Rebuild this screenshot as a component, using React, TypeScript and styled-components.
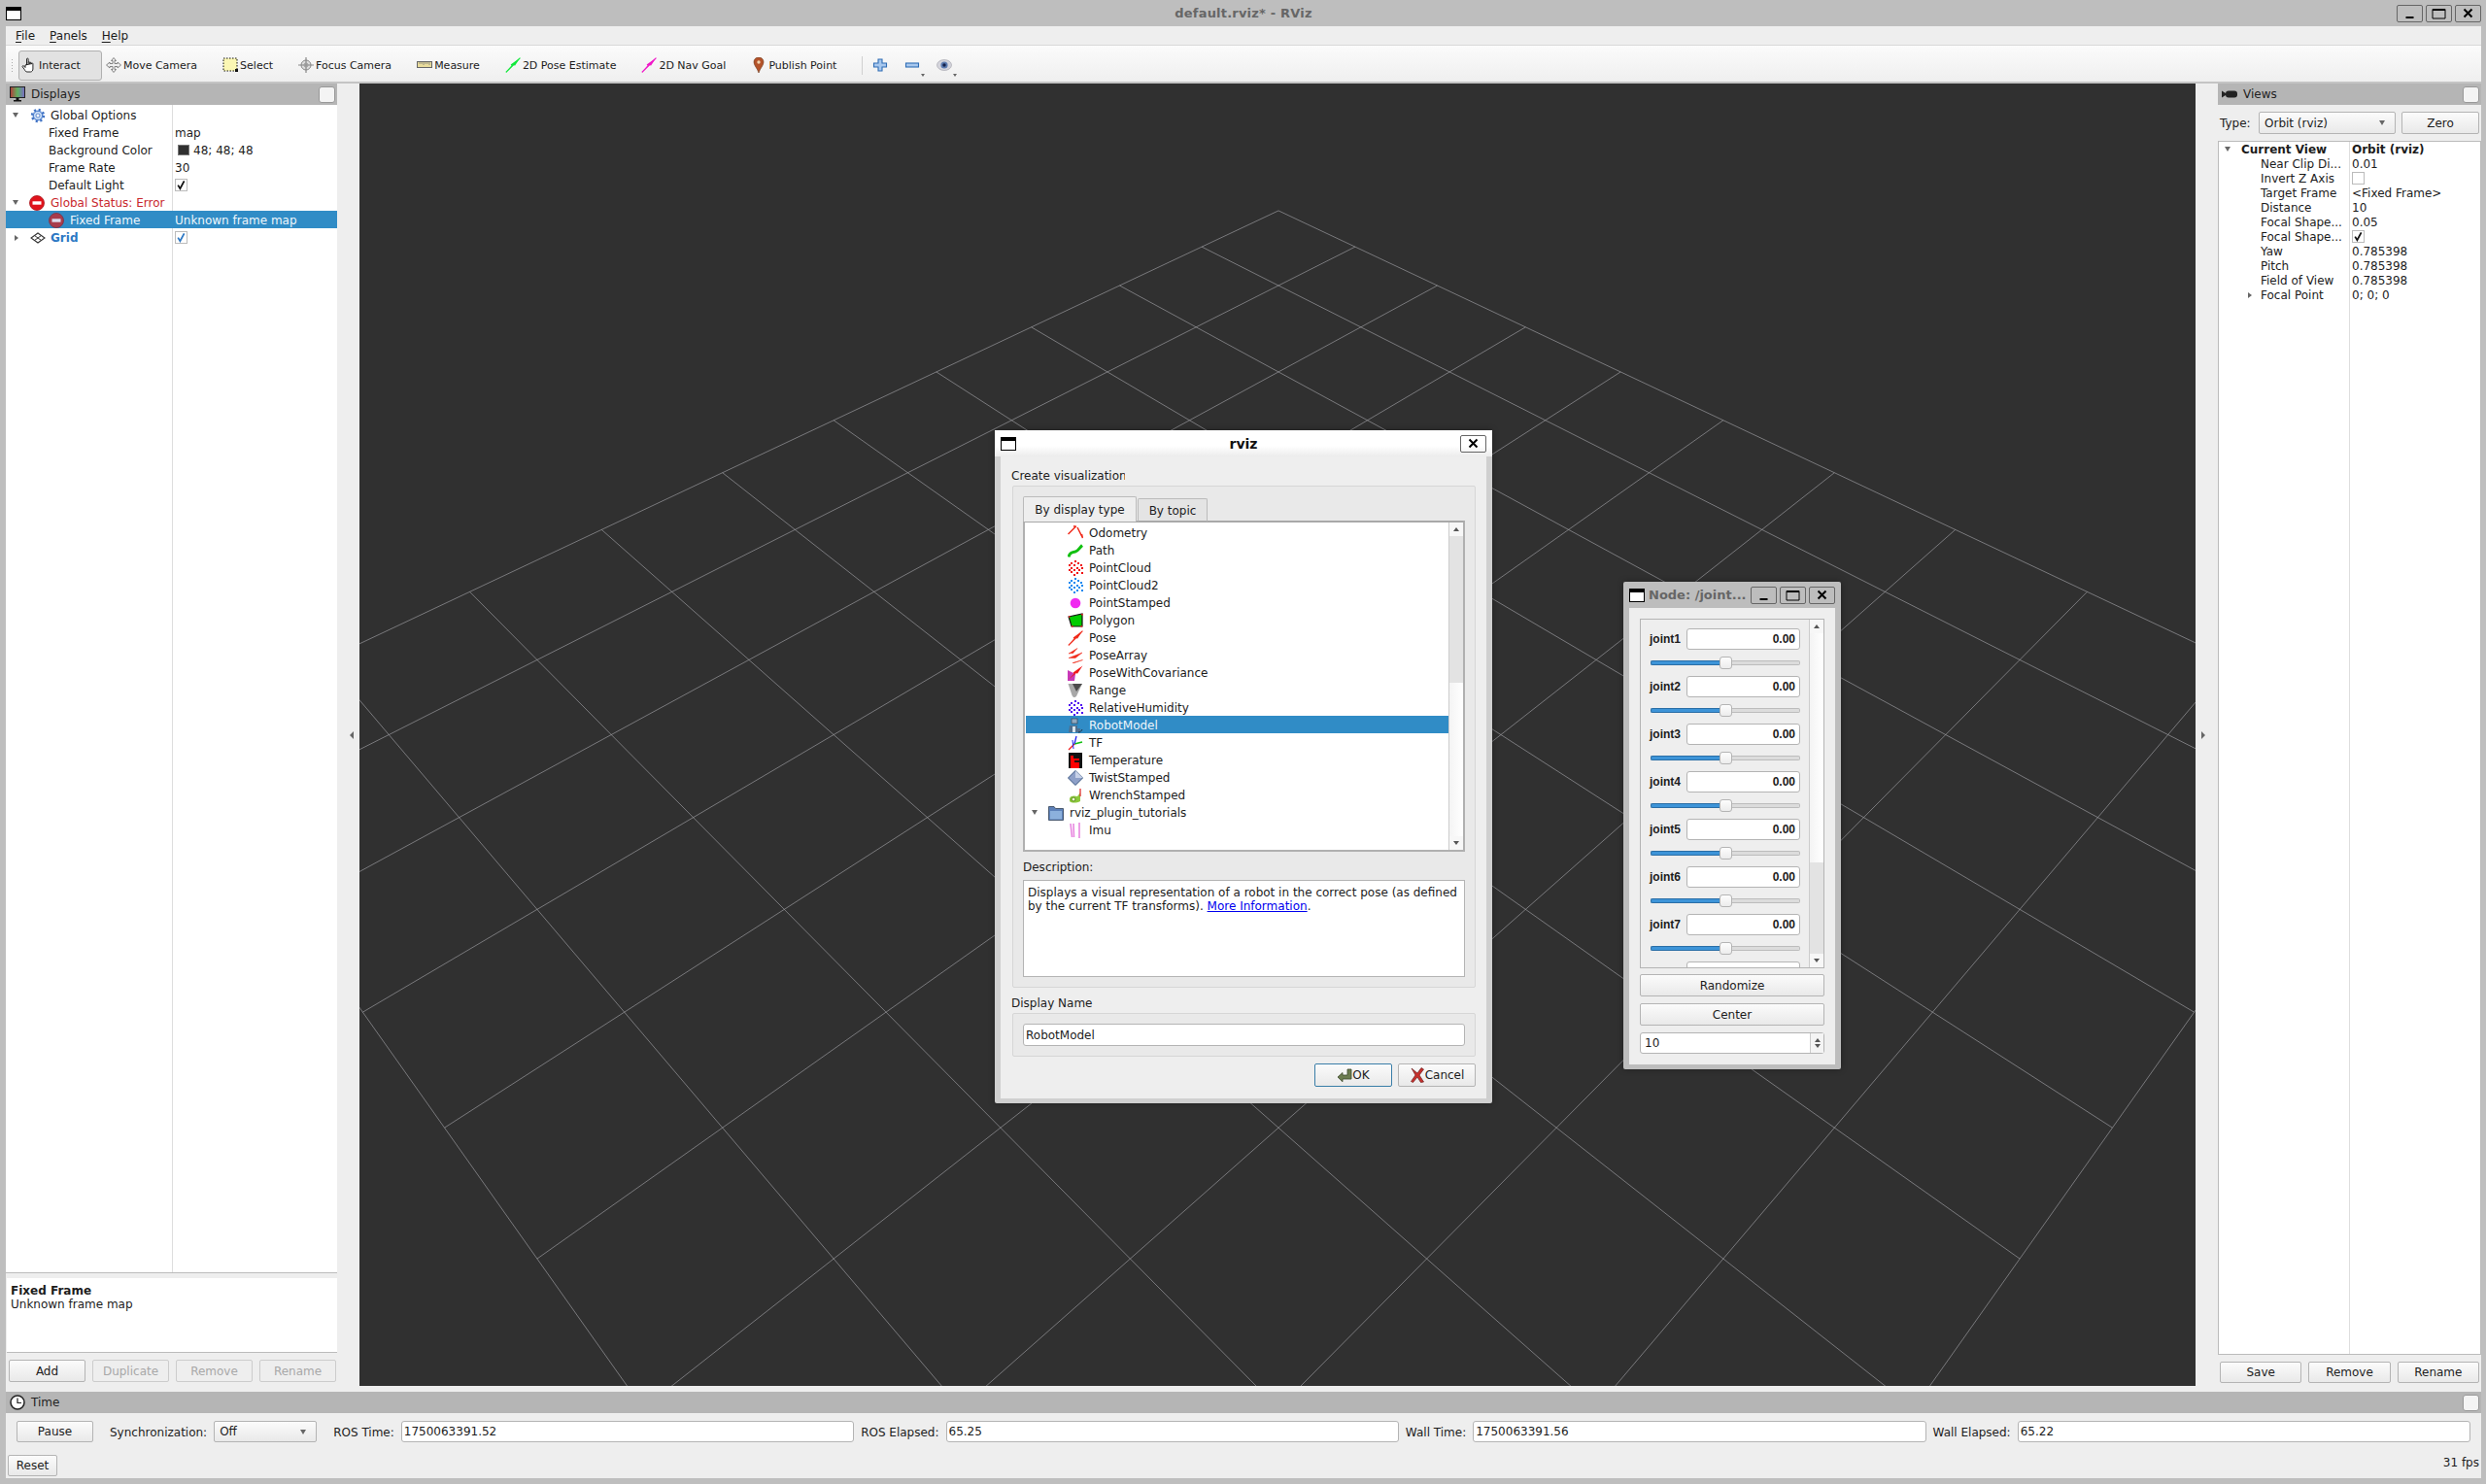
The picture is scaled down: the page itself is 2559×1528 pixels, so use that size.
import React from 'react';
import styled, {createGlobalStyle} from 'styled-components';

const GlobalStyle = createGlobalStyle`
  html, body {
    margin: 0;
    padding: 0;
    overflow: hidden;
    background: #bebebe;
  }
  * {
    box-sizing: border-box;
  }
`

const FONT = `"DejaVu Sans", sans-serif`
const SELECTED = '#308cc6'

// ---------- icons ----------

const IconSvg = styled.svg`
  flex: none;
  display: block;
`

const Ico = ({children}: {children: React.ReactNode}) => (
    <IconSvg width={16} height={16} viewBox="0 0 16 16">{children}</IconSvg>
)

const Check = ({color = '#111'}: {color?: string}) => (
    <IconSvg width="11" height="11" viewBox="0 0 11 11">
        <path d="M2.2 5.6 L4.4 9.2 L8.6 1.4" fill="none" stroke={color} strokeWidth="1.8"/>
    </IconSvg>
)

const HandIcon = () => <Ico><path d="M5.5 8V1.8c0-1 1.6-1 1.6 0V7m0-1.6c0-.9 1.6-.9 1.6 0V7m0-1c0-.9 1.6-.9 1.6 0v1.2m0-.6c0-.8 1.6-.8 1.6 0V12c0 1.500-1 3-2.500 3H6c-1.500 0-2-1-2.800-2.500L1.200 9.800c-.5-1 .8-1.700 1.500-.8L4 10.500V8z" fill="#fff" stroke="#111" strokeWidth=".9"/></Ico>
const MoveIcon = () => <Ico><path d="M8 .5 10.500 3.500H9V6.500H12V5L15.500 8 12 11V9.500H9V12.500H10.500L8 15.500 5.500 12.500H7V9.500H4V11L.5 8 4 5V6.500H7V3.500H5.500Z" fill="#eee" stroke="#777" strokeWidth=".9"/></Ico>
const SelectIcon = () => <Ico><rect x="1" y="1" width="14" height="13" fill="#fbf7b4" stroke="#111" strokeDasharray="1.500 1.500"/><rect x="13" y="12" width="3" height="3" fill="#111"/></Ico>
const FocusIcon = () => <Ico><circle cx="8" cy="8" r="5" fill="#ddd" stroke="#888"/><path d="M8 0V16M0 8H16" stroke="#888" strokeWidth="1.200"/><circle cx="8" cy="8" r="2" fill="none" stroke="#999"/></Ico>
const MeasureIcon = () => <Ico><rect x=".5" y="4.500" width="15" height="6" fill="#e9dc9c" stroke="#666"/><path d="M3 5V7M5 5V7M7 5V8M9 5V7M11 5V7M13 5V8" stroke="#777" strokeWidth=".7"/></Ico>
const PoseIcon = ({color}: {color: string}) => <Ico><path d="M.8 15.500 6.500 8.400 5.600 7.600 15.400.6 10 8.800 9 8Z" fill={color}/><path d="M.8 15.500 15.400.6" stroke={color} strokeWidth="1.100"/></Ico>
const PinIcon = () => <Ico><path d="M8 0C4.800 0 3 2.300 3 5c0 3.500 3.800 6.500 5 11 1.200-4.500 5-7.500 5-11 0-2.700-1.800-5-5-5z" fill="#b4532a" stroke="#6b3a1e" strokeWidth=".6"/><circle cx="8" cy="5" r="1.700" fill="#f0d5b0"/></Ico>
const PlusIcon = () => <Ico><path d="M6 2H10V6H14.500V10H10V14H6V10H1.500V6H6Z" fill="#a8c8ee" stroke="#2f6db5" strokeWidth="1.100"/></Ico>
const MinusIcon = () => <Ico><rect x="1.500" y="6" width="13" height="4" fill="#a8c8ee" stroke="#2f6db5" strokeWidth="1.100"/></Ico>
const EyeIcon = () => <Ico><ellipse cx="8" cy="8" rx="7.500" ry="5.500" fill="#d4d4dc" stroke="#a0a0a8" strokeWidth=".6"/><circle cx="8" cy="8" r="3.600" fill="#5c7bb0"/><circle cx="8" cy="8" r="1.700" fill="#14204a"/></Ico>

const MonitorIcon = () => (
    <Ico>
        <defs>
            <linearGradient id="scr" x1="0" x2="1" y1="0" y2="0">
                <stop offset="0" stopColor="#b33a3a"/>
                <stop offset=".5" stopColor="#60b060"/>
                <stop offset="1" stopColor="#7a6ac8"/>
            </linearGradient>
        </defs>
        <rect x=".5" y=".5" width="15" height="11" fill="url(#scr)" stroke="#222"/>
        <path d="M6.500 12H9.500V14H12V15.500H4V14H6.500Z" fill="#111"/>
    </Ico>
)
const CameraIcon = () => <Ico><path d="M0 4.500 4 7V9L0 11.500Z" fill="#222"/><rect x="4" y="4.500" width="12" height="7" rx="3" fill="#222"/></Ico>
const ClockIcon = () => <Ico><circle cx="8" cy="8" r="7" fill="#fff" stroke="#222" strokeWidth="1.500"/><path d="M8 3.500V8.500H12" fill="none" stroke="#222" strokeWidth="1.200"/></Ico>
const GearIcon = () => <Ico><circle cx="8" cy="8" r="5.800" fill="#a8c4ee" stroke="#3f72c4" strokeWidth="2.800" strokeDasharray="2 2.550"/><circle cx="8" cy="8" r="4.600" fill="#c9dcf5" stroke="#3f72c4" strokeWidth=".8"/><circle cx="8" cy="8" r="2" fill="#fff" stroke="#3f72c4" strokeWidth=".8"/></Ico>
const GridIcon = () => <Ico><path d="M8 3 15 8 8 13 1 8Z" fill="#fff" stroke="#333" strokeWidth="1.100"/><path d="M4.500 5.500 11.500 10.500M11.500 5.500 4.500 10.500" stroke="#333" strokeWidth="1"/></Ico>
const ErrorIcon = ({dim}: {dim?: boolean}) => (
    <Ico>
        <circle cx="8" cy="8" r="7.500" fill={dim ? '#a83c4c' : '#e0141c'} stroke={dim ? '#7c3044' : '#a81018'} strokeWidth=".8"/>
        <rect x="3.500" y="6.300" width="9" height="3.400" fill={dim ? '#dde' : '#fff'}/>
    </Ico>
)

const OdometryIcon = () => <Ico><path d="M.5 9 8 1.500M6 .8 9 1.300M10 2 15.500 13M14.500 9 15.500 13" fill="none" stroke="#f02a1a" strokeWidth="1.500"/></Ico>
const PathIcon = () => <Ico><path d="M1 14.500C2 10 5 9.500 8 9S12 5 15 2.500" fill="none" stroke="#10c010" strokeWidth="3"/></Ico>
const Dots = ({color}: {color: string}) => (
    <Ico>
        {[[7, 0], [3, 2], [10, 2], [1, 4], [6, 4], [13, 4], [3, 7], [9, 7], [14, 7], [1, 9], [6, 9], [11, 9], [3, 11], [9, 12], [14, 12], [6, 14]].map(([x, y]) => (
            <rect key={`${x}-${y}`} x={x} y={y} width="2" height="2" fill={color}/>
        ))}
    </Ico>
)
const PointStampedIcon = () => <Ico><circle cx="8" cy="8" r="5.300" fill="#f02af0"/></Ico>
const PolygonIcon = () => <Ico><path d="M1 4 15 1V14H4Z" fill="#0c0"/><path d="M1 4 15 1V14H4Z" fill="none" stroke="#111" strokeWidth="1.200"/><path d="M1 4H2.500M15 1V2.500M15 14H13.500M4 14H5.500" stroke="#f22" strokeWidth="1.500"/></Ico>
const PoseArrayIcon = () => <Ico><path d="M1 6 10 .5 5 6 4.500 5.500ZM1 10.500 15 5 8 10.500ZM5 15.500 15.500 12.500 7 15.500Z" fill="#f02a1a" stroke="#f02a1a" strokeWidth=".5"/></Ico>
const CovarianceIcon = () => <Ico><path d="M0 5 8 9 7 16H0Z" fill="#c838b8"/><path d="M1 14.500 6.500 8.500 5.600 7.600 15.400.6 10 8.800 9 8Z" fill="#f01a1a"/></Ico>
const RangeIcon = () => <Ico><path d="M.5 1H15L9 14C7 16 5.500 15 4.500 13Z" fill="#a8a8a8"/><path d="M5 1H15L9 9Z" fill="#4c4c4c"/></Ico>
const RobotIcon = () => <Ico><rect x="4" y="1" width="6" height="5" fill="#8fa8c0" stroke="#345" strokeWidth=".7"/><path d="M2 8H10V15H1ZM10 11H13V15H10Z" fill="#4f6f8f"/><path d="M11 15C13 15 14 14 15 12" stroke="#234" fill="none"/><rect x="5" y="9" width="3" height="6" fill="#d8e4ec"/></Ico>
const TfIcon = () => <Ico><path d="M7 9 1 15" stroke="#f01a1a" strokeWidth="1.300"/><path d="M7 9 15 7" stroke="#10c010" strokeWidth="1.300"/><path d="M7 9 9 1" stroke="#2020f0" strokeWidth="1.300"/><path d="M5 5 6 14" stroke="#2020f0" strokeWidth="1"/></Ico>
const TempIcon = () => <Ico><rect x="1" y="0" width="14" height="16" fill="#111"/><path d="M4 3H6V6H12V8H7V10H12V16H3V3Z" fill="#f00"/><path d="M12 0H15V16H12Z" fill="#111"/></Ico>
const TwistIcon = () => <Ico><path d="M8 .5 15.500 8 8 15.500 .5 8Z" fill="#8ea0c8" stroke="#33507c"/><path d="M8 .5 15.500 8 8 8Z" fill="#c8d2e8"/></Ico>
const WrenchIcon = () => <Ico><path d="M2 11C3 8 7 8 10 9L13 5V14C9 16 4 16 2 14Z" fill="#8cc83c"/><circle cx="6" cy="12" r="2" fill="#f0f8d0" stroke="#5a8c1c"/><path d="M13 9V1" stroke="#e03030" strokeWidth="1.300"/></Ico>
const FolderIcon = () => <Ico><path d="M.5 1.500H6L7.500 3.500H15.500V15.500H.5Z" fill="#5c80b8" stroke="#4a5a70"/><rect x="2" y="6" width="12" height="8.500" fill="#8cb0dc"/></Ico>
const ImuIcon = () => <Ico><path d="M3 1 4.500 15M6 1 6.500 15M12 0V16" stroke="#e888e0" strokeWidth="1.600" fill="none"/></Ico>

const OkIcon = () => <Ico><path d="M1 10 6 5.500V8H11V2H15V12H6V14.800Z" fill="#6c7c50" stroke="#3e4a2c" strokeWidth=".8"/></Ico>
const CancelIcon = () => <Ico><path d="M2 1 8 6 12 .5 14.500 2 10 8 14.500 15 11.500 15.500 8 10 3.500 15.500 1.500 14.500 6 8Z" fill="#c8302c" stroke="#6c2020" strokeWidth=".7"/></Ico>

// ---------- window chrome ----------

const Root = styled.div`
  position: relative;
  width: 2559px;
  height: 1528px;
  display: flex;
  flex-direction: column;
  padding: 0 5px 6px 6px;
  background: #bebebe;
  font-family: ${FONT};
  font-size: 12px;
  color: #1c1c1c;
`

const TitleBar = styled.div`
  height: 27px;
  margin: 0 -5px 0 -6px;
  padding: 0 5px 0 6px;
  display: grid;
  grid-template-columns: 1fr auto 1fr;
  align-items: center;
  letter-spacing: .2px;
  flex: none;
  & > :last-child {
    justify-self: end;
  }
`

const TitleText = styled.div<{$dim?: boolean}>`
  font-size: 13px;
  font-weight: 700;
  color: ${p => p.$dim ? '#666' : '#111'};
`

const DialogName = styled(TitleText)`
  font-size: 14px;
`

const NodeName = styled(TitleText)`
  flex: 1;
`

const WinIcon = styled.div`
  width: 16px;
  height: 14px;
  background: #fff;
  border: 1.5px solid #000;
  border-top-width: 4px;
  flex: none;
`

const WinButtons = styled.div`
  display: flex;
  gap: 3px;
  flex: none;
`

const WinButton = styled.div`
  width: 27px;
  height: 18px;
  border: 1px solid #666;
  border-radius: 2px;
  display: flex;
  align-items: center;
  justify-content: center;
`

const MinGlyph = () => <svg width="11" height="12" viewBox="0 0 11 12"><rect x="1.500" y="9" width="8" height="2" fill="#000"/></svg>
const MaxGlyph = () => <svg width="15" height="12" viewBox="0 0 15 12"><path d="M1 1.500H14V11H1Z" fill="none" stroke="#000"/><rect x="1" y="1" width="13" height="2" fill="#000"/></svg>
const CloseGlyph = () => <svg width="11" height="11" viewBox="0 0 11 11"><path d="M1.500 1.500 9.500 9.500M9.500 1.500 1.500 9.500" stroke="#000" strokeWidth="2"/></svg>

const MenuBar = styled.div`
  height: 20px;
  flex: none;
  display: flex;
  gap: 15px;
  padding-left: 10px;
  align-items: center;
  background: #eee;
  border-bottom: 1px solid #d8d8d8;
`

const MenuItem = styled.span`
  & u {
    text-underline-offset: 2px;
  }
`

const Toolbar = styled.div`
  height: 39px;
  flex: none;
  display: flex;
  align-items: center;
  padding-top: 3px;
  font-size: 11px;
  background: linear-gradient(#fbfbfb, #efefef);
  border-bottom: 2px solid #c4c4c4;
`

const Gripper = styled.div`
  width: 4px;
  height: 15px;
  margin: 0 4px 0 5px;
  flex: none;
  background: radial-gradient(circle, #aaa 0.6px, transparent 0.8px) 0 0 / 3px 3px;
`

const ToolButton = styled.div<{$active?: boolean}>`
  height: 31px;
  display: flex;
  align-items: center;
  gap: 2px;
  padding: 0 21px 0 ${p => p.$active ? '2px' : '3px'};
  flex: none;
  border-radius: 3px;
  border: 1px solid ${p => p.$active ? '#b0b0b0' : 'transparent'};
  background: ${p => p.$active ? '#e2e2e2' : 'none'};
`

const ToolSep = styled.div`
  width: 1px;
  height: 19px;
  margin: 0 9px 0 4px;
  background: #d0d0d0;
  flex: none;
`

const IconTool = styled.div`
  width: 33px;
  height: 24px;
  padding-left: 1px;
  display: flex;
  align-items: center;
  flex: none;
  position: relative;
`

const DropMark = styled.span`
  position: absolute;
  right: 11px;
  bottom: 0;
  border-left: 2.500px solid transparent;
  border-right: 2.500px solid transparent;
  border-top: 3px solid #666;
`

// ---------- main panes ----------

const Main = styled.div`
  flex: none;
  height: 1347px;
  display: flex;
  background: #eee;
  padding-bottom: 6px;
`

const SidePanel = styled.div<{$width: number}>`
  width: ${p => p.$width}px;
  flex: none;
  display: flex;
  flex-direction: column;
`

const PanelHeader = styled.div`
  height: 22px;
  flex: none;
  display: flex;
  align-items: center;
  gap: 6px;
  padding: 0 2px 0 4px;
  background: #b5b5b5;
  color: #222;
`

const HeaderTitle = styled.span`
  flex: 1;
`

const FloatButton = styled.div`
  width: 17px;
  height: 17px;
  background: #f4f4f4;
  border: 1px solid #999;
  border-radius: 3px;
  flex: none;
`

const Tree = styled.div<{$split: number, $pad: number, $framed?: boolean}>`
  flex: 1;
  min-height: 0;
  padding-top: ${p => p.$pad}px;
  background: linear-gradient(#dedede, #dedede) ${p => p.$split}px 0 / 1px 100% no-repeat, #fff;
  border: ${p => p.$framed ? '1px solid #bbb' : 'none'};
  border-bottom: 1px solid #bbb;
`

const TreeRow = styled.div<{$h: number, $split: number, $selected?: boolean}>`
  height: ${p => p.$h}px;
  padding-top: ${p => p.$h > 15 ? 1 : 0}px;
  display: grid;
  grid-template-columns: ${p => p.$split}px 1fr;
  align-items: center;
  background: ${p => p.$selected ? SELECTED : 'none'};
  color: ${p => p.$selected ? '#eef6fb' : 'inherit'};
`

const NameCell = styled.div<{$indent: number, $color?: string, $bold?: boolean}>`
  display: flex;
  align-items: center;
  padding-left: ${p => p.$indent}px;
  color: ${p => p.$color || 'inherit'};
  font-weight: ${p => p.$bold ? 700 : 400};
  white-space: nowrap;
  overflow: hidden;
`

const ValueCell = styled.div<{$bold?: boolean, $pad?: number}>`
  display: flex;
  align-items: center;
  gap: 4px;
  padding-left: ${p => p.$pad ?? 3}px;
  font-weight: ${p => p.$bold ? 700 : 400};
  white-space: nowrap;
`

const ArrowSlot = styled.div<{$w: number}>`
  width: ${p => p.$w}px;
  flex: none;
  display: flex;
`

const ArrowDown = styled.span`
  border-left: 3.500px solid transparent;
  border-right: 3.500px solid transparent;
  border-top: 5px solid #666;
`

const ArrowRight = styled.span`
  margin-left: 2px;
  border-top: 3.500px solid transparent;
  border-bottom: 3.500px solid transparent;
  border-left: 4px solid #666;
`

const RowIcon = styled.span<{$gap: number}>`
  margin-right: ${p => p.$gap}px;
  flex: none;
`

const CheckBox = styled.span`
  width: 13px;
  height: 13px;
  border: 1px solid #bbb;
  background: #fff;
  display: flex;
  align-items: center;
  justify-content: center;
`

const Swatch = styled.span`
  width: 12px;
  height: 11px;
  margin-left: 3px;
  background: #303030;
  border: 1px solid #777;
`

const SplitHandle = styled.div`
  height: 5px;
  flex: none;
`

const HelpBox = styled.div`
  height: 77px;
  flex: none;
  margin-left: 1px;
  padding: 6px 4px;
  background: #fff;
  border-bottom: 1px solid #bbb;
  line-height: 14px;
`

const HelpTitle = styled.div`
  font-weight: 700;
`

const ButtonRow = styled.div<{$pad: string, $gap: number}>`
  display: flex;
  gap: ${p => p.$gap}px;
  padding: ${p => p.$pad};
  flex: none;
`

const Button = styled.div<{$disabled?: boolean, $h?: number, $w?: number, $default?: boolean}>`
  height: ${p => p.$h || 23}px;
  ${p => p.$w ? `width: ${p.$w}px; flex: none;` : 'flex: 1;'}
  display: flex;
  align-items: center;
  justify-content: center;
  border-radius: 2px;
  border: 1px solid ${p => p.$default ? '#3a7ea8' : p.$disabled ? '#ccc' : '#b4b4b4'};
  background: ${p => p.$disabled ? '#eee' : 'linear-gradient(#fbfbfb, #e9e9e9)'};
  color: ${p => p.$disabled ? '#a8a8a8' : 'inherit'};
`

const ZeroButton = styled(Button)`
  margin-left: 6px;
`

const NodeButton = styled(Button)`
  flex: none;
`

const Splitter = styled.div<{$width: number, $pad: string}>`
  width: ${p => p.$width}px;
  flex: none;
  display: flex;
  align-items: center;
  padding: ${p => p.$pad};
  margin-bottom: -1px;
`

const SplitArrowLeft = styled.span`
  border-top: 4px solid transparent;
  border-bottom: 4px solid transparent;
  border-right: 4px solid #666;
`

const SplitArrowRight = styled.span`
  border-top: 4px solid transparent;
  border-bottom: 4px solid transparent;
  border-left: 4px solid #666;
`

const Viewport = styled.div`
  flex: 1;
  min-width: 0;
  background: #303030;
`

const ViewRow = styled.div`
  height: 37px;
  flex: none;
  display: flex;
  align-items: center;
  padding: 0 2px;
`

const TypeLabel = styled.span`
  width: 40px;
  flex: none;
`

const Combo = styled.div<{$w: number, $h?: number}>`
  width: ${p => p.$w}px;
  height: ${p => p.$h || 23}px;
  flex: none;
  display: flex;
  align-items: center;
  justify-content: space-between;
  padding: 0 10px 0 5px;
  border: 1px solid #b4b4b4;
  border-radius: 2px;
  background: linear-gradient(#fbfbfb, #e9e9e9);
`

// ---------- time panel ----------

const TimePanel = styled.div`
  flex: 1;
  display: flex;
  flex-direction: column;
  background: #eee;
`

const TimeRow = styled.div`
  height: 30px;
  margin-top: 8px;
  padding: 0 11px;
  display: flex;
  align-items: flex-start;
  gap: 7px;
`

const TimeLabel = styled.span<{$left?: number}>`
  flex: none;
  height: 22px;
  padding-top: 2px;
  display: flex;
  align-items: center;
  margin-left: ${p => p.$left || 0}px;
`

const LineInput = styled.div<{$right?: boolean, $bold?: boolean, $w?: number, $h?: number}>`
  ${p => p.$w ? `width: ${p.$w}px; flex: none;` : 'flex: 1; min-width: 0;'}
  height: ${p => p.$h || 22}px;
  display: flex;
  align-items: center;
  justify-content: ${p => p.$right ? 'flex-end' : 'flex-start'};
  padding: 0 4px 0 2px;
  background: #fff;
  border: 1px solid #b4b4b4;
  border-radius: 3px;
  font-family: ${p => p.$bold ? `"Liberation Sans", sans-serif` : 'inherit'};
  font-weight: ${p => p.$bold ? 700 : 400};
`

const NameInput = styled(LineInput)`
  flex: none;
`

const ResetRow = styled.div`
  margin-top: 5px;
  display: flex;
  align-items: center;
  justify-content: space-between;
  padding: 0 2px;
`

const FpsLabel = styled.span`
  margin-bottom: 7px;
`

// ---------- floating windows ----------

const Float = styled.div<{$x: number, $y: number, $w: number, $h: number}>`
  position: absolute;
  left: ${p => p.$x}px;
  top: ${p => p.$y}px;
  width: ${p => p.$w}px;
  height: ${p => p.$h}px;
  display: flex;
  flex-direction: column;
  padding: 0 6px 5px;
  background: ${p => p.$w > 300 ? '#cfcfcf' : '#bdbdbd'};
  border-radius: 2px;
  box-shadow: 0 0 6px rgba(0, 0, 0, .35);
`

const DialogTitle = styled.div`
  height: 27px;
  margin: 0 -6px;
  padding: 0 6px;
  flex: none;
  display: grid;
  grid-template-columns: 27px 1fr 27px;
  align-items: center;
  justify-items: center;
  background: linear-gradient(#fff 60%, #ececec);
  & > :first-child {
    justify-self: start;
  }
`

const DialogBody = styled.div`
  flex: 1;
  display: flex;
  flex-direction: column;
  padding: 0 11px 0 12px;
  background: #eee;
`

const ClipLabel = styled.div`
  width: 117px;
  height: 30px;
  margin-left: -1px;
  display: flex;
  align-items: center;
  padding-top: 9px;
  overflow: hidden;
  white-space: nowrap;
  flex: none;
`

const GroupBox = styled.div`
  display: flex;
  flex-direction: column;
  padding: 10px;
  background: #e9e9e9;
  border: 1px solid #d6d6d6;
  border-radius: 2px;
  flex: none;
`

const Tabs = styled.div`
  height: 26px;
  margin-bottom: -1px;
  display: flex;
  align-items: flex-end;
  position: relative;
  flex: none;
`

const Tab = styled.div<{$active?: boolean}>`
  height: ${p => p.$active ? 26 : 24}px;
  width: ${p => p.$active ? 117 : 72}px;
  margin-left: ${p => p.$active ? 0 : 1}px;
  padding-top: 1px;
  display: flex;
  align-items: center;
  justify-content: center;
  flex: none;
  background: ${p => p.$active ? '#eee' : '#e4e4e4'};
  border: 1px solid #bbb;
  border-bottom: ${p => p.$active ? 'none' : '1px solid #aaa'};
  border-radius: 2px 2px 0 0;
`

const ListBox = styled.div`
  height: 341px;
  flex: none;
  display: flex;
  background: #fff;
  border: 2px solid #b0b0b0;
  border-top-color: #a8a8a8;
`

const List = styled.div`
  flex: 1;
  min-width: 0;
  padding: 1px 0 0 1px;
`

const ListRow = styled.div<{$indent: number, $selected?: boolean}>`
  height: 18px;
  display: flex;
  align-items: center;
  padding: 1px 0 0 ${p => p.$indent}px;
  background: ${p => p.$selected ? SELECTED : 'none'};
  color: ${p => p.$selected ? '#eef6fb' : 'inherit'};
`

const Scroll = styled.div`
  width: 15px;
  flex: none;
  display: flex;
  flex-direction: column;
  border-left: 1px solid #ccc;
  background: #fdfdfd;
`

const ScrollStep = styled.div`
  height: 14px;
  flex: none;
  display: flex;
  align-items: center;
  justify-content: center;
  background: #f7f7f7;
`

const ScrollUp = styled.span`
  border-left: 3.500px solid transparent;
  border-right: 3.500px solid transparent;
  border-bottom: 4px solid #555;
`

const ScrollDown = styled.span`
  border-left: 3.500px solid transparent;
  border-right: 3.500px solid transparent;
  border-top: 4px solid #555;
`

const ScrollPart = styled.div<{$grey?: boolean, $h?: number}>`
  ${p => p.$h ? `height: ${p.$h}px; flex: none;` : 'flex: 1;'}
  background: ${p => p.$grey ? '#e3e3e3' : 'linear-gradient(90deg, #f4f4f4, #fff)'};
`

const FieldLabel = styled.div`
  height: 29px;
  flex: none;
  display: flex;
  align-items: center;
  padding-top: 2px;
`

const DescBox = styled.div`
  height: 100px;
  flex: none;
  padding: 5px 4px;
  background: #fff;
  border: 1px solid #b4b4b4;
  line-height: 14px;
  white-space: nowrap;
`

const DescLink = styled.span`
  color: #0000ee;
  text-decoration: underline;
`

const NameLabel = styled.div`
  height: 26px;
  margin-left: -1px;
  padding-top: 6px;
  display: flex;
  align-items: center;
  flex: none;
`

const DialogButtons = styled.div`
  display: flex;
  justify-content: flex-end;
  gap: 6px;
  padding-top: 7px;
  flex: none;
`

// ---------- joint state window ----------

const NodeTitle = styled.div`
  height: 27px;
  flex: none;
  display: flex;
  align-items: center;
  gap: 4px;
`

const NodeBody = styled.div`
  flex: 1;
  min-height: 0;
  display: flex;
  flex-direction: column;
  padding: 11px 11px 0;
  background: #eee;
`

const JointBox = styled.div`
  height: 360px;
  flex: none;
  display: flex;
  border: 1px solid #b4b4b4;
  overflow: hidden;
`

const JointList = styled.div`
  flex: 1;
  min-width: 0;
  padding: 9px 9px 0 9px;
  overflow: hidden;
`

const Joint = styled.div`
  height: 49px;
  display: flex;
  flex-direction: column;
  gap: 7px;
`

const JointHead = styled.div`
  display: flex;
  align-items: center;
  height: 22px;
  flex: none;
  font-family: "Liberation Sans", sans-serif;
  font-weight: 700;
`

const JointName = styled.span`
  width: 38px;
  flex: none;
`

const Slider = styled.div`
  height: 13px;
  margin: 0 0 0 1px;
  width: 154px;
  display: flex;
  align-items: center;
  flex: none;
`

const SliderFill = styled.div`
  width: 71px;
  height: 5px;
  background: #3d94d8;
  border: 1px solid #2a6ea6;
  border-right: none;
  border-radius: 2px 0 0 2px;
`

const SliderKnob = styled.div`
  width: 13px;
  height: 13px;
  flex: none;
  background: linear-gradient(#fdfdfd, #ececec);
  border: 1px solid #b4b4b4;
  border-radius: 3px;
`

const SliderRest = styled.div`
  flex: 1;
  height: 5px;
  background: #dcdcdc;
  border: 1px solid #bcbcbc;
  border-left: none;
  border-radius: 0 2px 2px 0;
`

const NodeControls = styled.div`
  display: flex;
  flex-direction: column;
  gap: 7px;
  padding-top: 6px;
  flex: none;
`

const SpinRow = styled.div`
  height: 22px;
  display: flex;
  background: #fff;
  border: 1px solid #b4b4b4;
  border-radius: 3px;
`

const SpinValue = styled.div`
  flex: 1;
  display: flex;
  align-items: center;
  padding-left: 4px;
`

const SpinButtons = styled.div`
  width: 14px;
  flex: none;
  display: flex;
  flex-direction: column;
  align-items: center;
  justify-content: center;
  gap: 2px;
  border-left: 1px solid #ccc;
  background: #f4f4f4;
`

// ---------- ground grid, projected the same way the orbit camera does ----------

const VIEW_W = 1890
const VIEW_H = 1341
const FOCAL = (VIEW_H / 2) / Math.tan(0.785398 / 2)

function project(x: number, y: number): [number, number] {
    // camera at (5, 5, 7.07) looking at the origin
    const s = Math.SQRT1_2
    const rx = x - 5
    const ry = y - 5
    const rz = -10 * s
    const depth = -0.5 * rx - 0.5 * ry - s * rz
    const up = -0.5 * rx - 0.5 * ry + s * rz
    const side = -s * rx + s * ry
    return [VIEW_W / 2 + 1 + FOCAL * side / depth, VIEW_H / 2 - FOCAL * up / depth]
}

const GroundGrid = () => {
    const lines = []
    for (let i = -5; i <= 5; i++) {
        lines.push([project(i, -5), project(i, 5)], [project(-5, i), project(5, i)])
    }
    return (
        <IconSvg width="100%" height="100%" viewBox={`0 0 ${VIEW_W} ${VIEW_H}`}>
            {lines.map(([a, b], i) => (
                <line key={i} x1={a[0]} y1={a[1]} x2={b[0]} y2={b[1]} stroke="rgb(160,160,164)" strokeOpacity=".65" strokeWidth="1"/>
            ))}
        </IconSvg>
    )
}

// ---------- data ----------

const viewRows: [string, React.ReactNode][] = [
    ['Near Clip Di...', '0.01'],
    ['Invert Z Axis', <CheckBox/>],
    ['Target Frame', '<Fixed Frame>'],
    ['Distance', '10'],
    ['Focal Shape...', '0.05'],
    ['Focal Shape...', <CheckBox><Check/></CheckBox>],
    ['Yaw', '0.785398'],
    ['Pitch', '0.785398'],
    ['Field of View', '0.785398'],
]

const displayTypes: [string, React.ReactNode][] = [
    ['Odometry', <OdometryIcon/>],
    ['Path', <PathIcon/>],
    ['PointCloud', <Dots color="#f01010"/>],
    ['PointCloud2', <Dots color="#1088f0"/>],
    ['PointStamped', <PointStampedIcon/>],
    ['Polygon', <PolygonIcon/>],
    ['Pose', <PoseIcon color="#f02a1a"/>],
    ['PoseArray', <PoseArrayIcon/>],
    ['PoseWithCovariance', <CovarianceIcon/>],
    ['Range', <RangeIcon/>],
    ['RelativeHumidity', <Dots color="#5010f0"/>],
    ['RobotModel', <RobotIcon/>],
    ['TF', <TfIcon/>],
    ['Temperature', <TempIcon/>],
    ['TwistStamped', <TwistIcon/>],
    ['WrenchStamped', <WrenchIcon/>],
]

const tools: [string, React.ReactNode][] = [
    ['Move Camera', <MoveIcon/>],
    ['Select', <SelectIcon/>],
    ['Focus Camera', <FocusIcon/>],
    ['Measure', <MeasureIcon/>],
    ['2D Pose Estimate', <PoseIcon color="#12e83c"/>],
    ['2D Nav Goal', <PoseIcon color="#f018c8"/>],
    ['Publish Point', <PinIcon/>],
]

const joints = ['joint1', 'joint2', 'joint3', 'joint4', 'joint5', 'joint6', 'joint7', '']

const WindowButtons = () => (
    <WinButtons>
        <WinButton><MinGlyph/></WinButton>
        <WinButton><MaxGlyph/></WinButton>
        <WinButton><CloseGlyph/></WinButton>
    </WinButtons>
)

function App() {
    return (
        <Root>
            <GlobalStyle/>
            <TitleBar>
                <WinIcon/>
                <TitleText $dim>default.rviz* - RViz</TitleText>
                <WindowButtons/>
            </TitleBar>
            <MenuBar>
                <MenuItem><u>F</u>ile</MenuItem>
                <MenuItem><u>P</u>anels</MenuItem>
                <MenuItem><u>H</u>elp</MenuItem>
            </MenuBar>
            <Toolbar>
                <Gripper/>
                <ToolButton $active><HandIcon/>Interact</ToolButton>
                {tools.map(([label, icon]) => (
                    <ToolButton key={label}>{icon}{label}</ToolButton>
                ))}
                <ToolSep/>
                <IconTool><PlusIcon/></IconTool>
                <IconTool><MinusIcon/><DropMark/></IconTool>
                <IconTool><EyeIcon/><DropMark/></IconTool>
            </Toolbar>
            <Main>
                <SidePanel $width={341}>
                    <PanelHeader>
                        <MonitorIcon/>
                        <HeaderTitle>Displays</HeaderTitle>
                        <FloatButton/>
                    </PanelHeader>
                    <Tree $split={171} $pad={1}>
                        <TreeRow $h={18} $split={172}>
                            <NameCell $indent={7}><ArrowSlot $w={18}><ArrowDown/></ArrowSlot><RowIcon $gap={5}><GearIcon/></RowIcon>Global Options</NameCell>
                        </TreeRow>
                        <TreeRow $h={18} $split={172}>
                            <NameCell $indent={44}>Fixed Frame</NameCell>
                            <ValueCell $pad={2}>map</ValueCell>
                        </TreeRow>
                        <TreeRow $h={18} $split={172}>
                            <NameCell $indent={44}>Background Color</NameCell>
                            <ValueCell $pad={2}><Swatch/>48; 48; 48</ValueCell>
                        </TreeRow>
                        <TreeRow $h={18} $split={172}>
                            <NameCell $indent={44}>Frame Rate</NameCell>
                            <ValueCell $pad={2}>30</ValueCell>
                        </TreeRow>
                        <TreeRow $h={18} $split={172}>
                            <NameCell $indent={44}>Default Light</NameCell>
                            <ValueCell $pad={2}><CheckBox><Check/></CheckBox></ValueCell>
                        </TreeRow>
                        <TreeRow $h={18} $split={172}>
                            <NameCell $indent={7} $color="#c8282d"><ArrowSlot $w={17}><ArrowDown/></ArrowSlot><RowIcon $gap={6}><ErrorIcon/></RowIcon>Global Status: Error</NameCell>
                        </TreeRow>
                        <TreeRow $h={18} $split={172} $selected>
                            <NameCell $indent={44}><RowIcon $gap={6}><ErrorIcon dim/></RowIcon>Fixed Frame</NameCell>
                            <ValueCell $pad={2}>Unknown frame map</ValueCell>
                        </TreeRow>
                        <TreeRow $h={18} $split={172}>
                            <NameCell $indent={7} $color="#2d78c4" $bold><ArrowSlot $w={18}><ArrowRight/></ArrowSlot><RowIcon $gap={5}><GridIcon/></RowIcon>Grid</NameCell>
                            <ValueCell $pad={2}><CheckBox><Check color="#2d78c4"/></CheckBox></ValueCell>
                        </TreeRow>
                    </Tree>
                    <SplitHandle/>
                    <HelpBox>
                        <HelpTitle>Fixed Frame</HelpTitle>
                        Unknown frame map
                    </HelpBox>
                    <ButtonRow $pad="7px 1px 4px 3px" $gap={7}>
                        <Button>Add</Button>
                        <Button $disabled>Duplicate</Button>
                        <Button $disabled>Remove</Button>
                        <Button $disabled>Rename</Button>
                    </ButtonRow>
                </SidePanel>
                <Splitter $width={23} $pad="0 0 0 13px"><SplitArrowLeft/></Splitter>
                <Viewport><GroundGrid/></Viewport>
                <Splitter $width={23} $pad="0 0 0 6px"><SplitArrowRight/></Splitter>
                <SidePanel $width={271}>
                    <PanelHeader>
                        <CameraIcon/>
                        <HeaderTitle>Views</HeaderTitle>
                        <FloatButton/>
                    </PanelHeader>
                    <ViewRow>
                        <TypeLabel>Type:</TypeLabel>
                        <Combo $w={141}>Orbit (rviz)<ArrowDown/></Combo>
                        <ZeroButton $w={80}>Zero</ZeroButton>
                    </ViewRow>
                    <Tree $split={134} $pad={0} $framed>
                        <TreeRow $h={15} $split={134}>
                            <NameCell $indent={6} $bold><ArrowSlot $w={17}><ArrowDown/></ArrowSlot>Current View</NameCell>
                            <ValueCell $bold>Orbit (rviz)</ValueCell>
                        </TreeRow>
                        {viewRows.map(([name, value], i) => (
                            <TreeRow key={i} $h={15} $split={134}>
                                <NameCell $indent={43}>{name}</NameCell>
                                <ValueCell>{value}</ValueCell>
                            </TreeRow>
                        ))}
                        <TreeRow $h={15} $split={134}>
                            <NameCell $indent={28}><ArrowSlot $w={15}><ArrowRight/></ArrowSlot>Focal Point</NameCell>
                            <ValueCell>0; 0; 0</ValueCell>
                        </TreeRow>
                    </Tree>
                    <ButtonRow $pad="7px 2px 3px 2px" $gap={7}>
                        <Button $h={22}>Save</Button>
                        <Button $h={22}>Remove</Button>
                        <Button $h={22}>Rename</Button>
                    </ButtonRow>
                </SidePanel>
            </Main>
            <TimePanel>
                <PanelHeader>
                    <ClockIcon/>
                    <HeaderTitle>Time</HeaderTitle>
                    <FloatButton/>
                </PanelHeader>
                <TimeRow>
                    <Button $w={79} $h={22}>Pause</Button>
                    <TimeLabel $left={10}>Synchronization:</TimeLabel>
                    <Combo $w={106} $h={22}>Off<ArrowDown/></Combo>
                    <TimeLabel $left={10}>ROS Time:</TimeLabel>
                    <LineInput>1750063391.52</LineInput>
                    <TimeLabel>ROS Elapsed:</TimeLabel>
                    <LineInput>65.25</LineInput>
                    <TimeLabel>Wall Time:</TimeLabel>
                    <LineInput>1750063391.56</LineInput>
                    <TimeLabel>Wall Elapsed:</TimeLabel>
                    <LineInput>65.22</LineInput>
                </TimeRow>
                <ResetRow>
                    <Button $w={51} $h={22}>Reset</Button>
                    <FpsLabel>31 fps</FpsLabel>
                </ResetRow>
            </TimePanel>

            <Float $x={1024} $y={443} $w={512} $h={693}>
                <DialogTitle>
                    <WinIcon/>
                    <DialogName>rviz</DialogName>
                    <WinButton><CloseGlyph/></WinButton>
                </DialogTitle>
                <DialogBody>
                    <ClipLabel>Create visualization</ClipLabel>
                    <GroupBox>
                        <Tabs>
                            <Tab $active>By display type</Tab>
                            <Tab>By topic</Tab>
                        </Tabs>
                        <ListBox>
                            <List>
                                {displayTypes.map(([name, icon]) => (
                                    <ListRow key={name} $indent={43} $selected={name === 'RobotModel'}>
                                        <RowIcon $gap={6}>{icon}</RowIcon>{name}
                                    </ListRow>
                                ))}
                                <ListRow $indent={6}>
                                    <ArrowSlot $w={17}><ArrowDown/></ArrowSlot>
                                    <RowIcon $gap={6}><FolderIcon/></RowIcon>rviz_plugin_tutorials
                                </ListRow>
                                <ListRow $indent={43}><RowIcon $gap={6}><ImuIcon/></RowIcon>Imu</ListRow>
                            </List>
                            <Scroll>
                                <ScrollStep><ScrollUp/></ScrollStep>
                                <ScrollPart $grey $h={151}/>
                                <ScrollPart/>
                                <ScrollStep><ScrollDown/></ScrollStep>
                            </Scroll>
                        </ListBox>
                        <FieldLabel>Description:</FieldLabel>
                        <DescBox>
                            Displays a visual representation of a robot in the correct pose (as defined<br/>
                            by the current TF transforms). <DescLink>More Information</DescLink>.
                        </DescBox>
                    </GroupBox>
                    <NameLabel>Display Name</NameLabel>
                    <GroupBox>
                        <NameInput $h={23}>RobotModel</NameInput>
                    </GroupBox>
                    <DialogButtons>
                        <Button $w={80} $h={24} $default><OkIcon/>OK</Button>
                        <Button $w={80} $h={24}><CancelIcon/>Cancel</Button>
                    </DialogButtons>
                </DialogBody>
            </Float>

            <Float $x={1671} $y={599} $w={224} $h={502}>
                <NodeTitle>
                    <WinIcon/>
                    <NodeName $dim>Node: /joint...</NodeName>
                    <WindowButtons/>
                </NodeTitle>
                <NodeBody>
                    <JointBox>
                        <JointList>
                            {joints.map((name, i) => (
                                <Joint key={i}>
                                    <JointHead>
                                        <JointName>{name}</JointName>
                                        <LineInput $right $bold>{name && '0.00'}</LineInput>
                                    </JointHead>
                                    <Slider>
                                        <SliderFill/><SliderKnob/><SliderRest/>
                                    </Slider>
                                </Joint>
                            ))}
                        </JointList>
                        <Scroll>
                            <ScrollStep><ScrollUp/></ScrollStep>
                            <ScrollPart $h={236}/>
                            <ScrollPart $grey/>
                            <ScrollStep><ScrollDown/></ScrollStep>
                        </Scroll>
                    </JointBox>
                    <NodeControls>
                        <NodeButton $h={23}>Randomize</NodeButton>
                        <NodeButton $h={23}>Center</NodeButton>
                        <SpinRow>
                            <SpinValue>10</SpinValue>
                            <SpinButtons><ScrollUp/><ScrollDown/></SpinButtons>
                        </SpinRow>
                    </NodeControls>
                </NodeBody>
            </Float>
        </Root>
    );
}

export default App;
